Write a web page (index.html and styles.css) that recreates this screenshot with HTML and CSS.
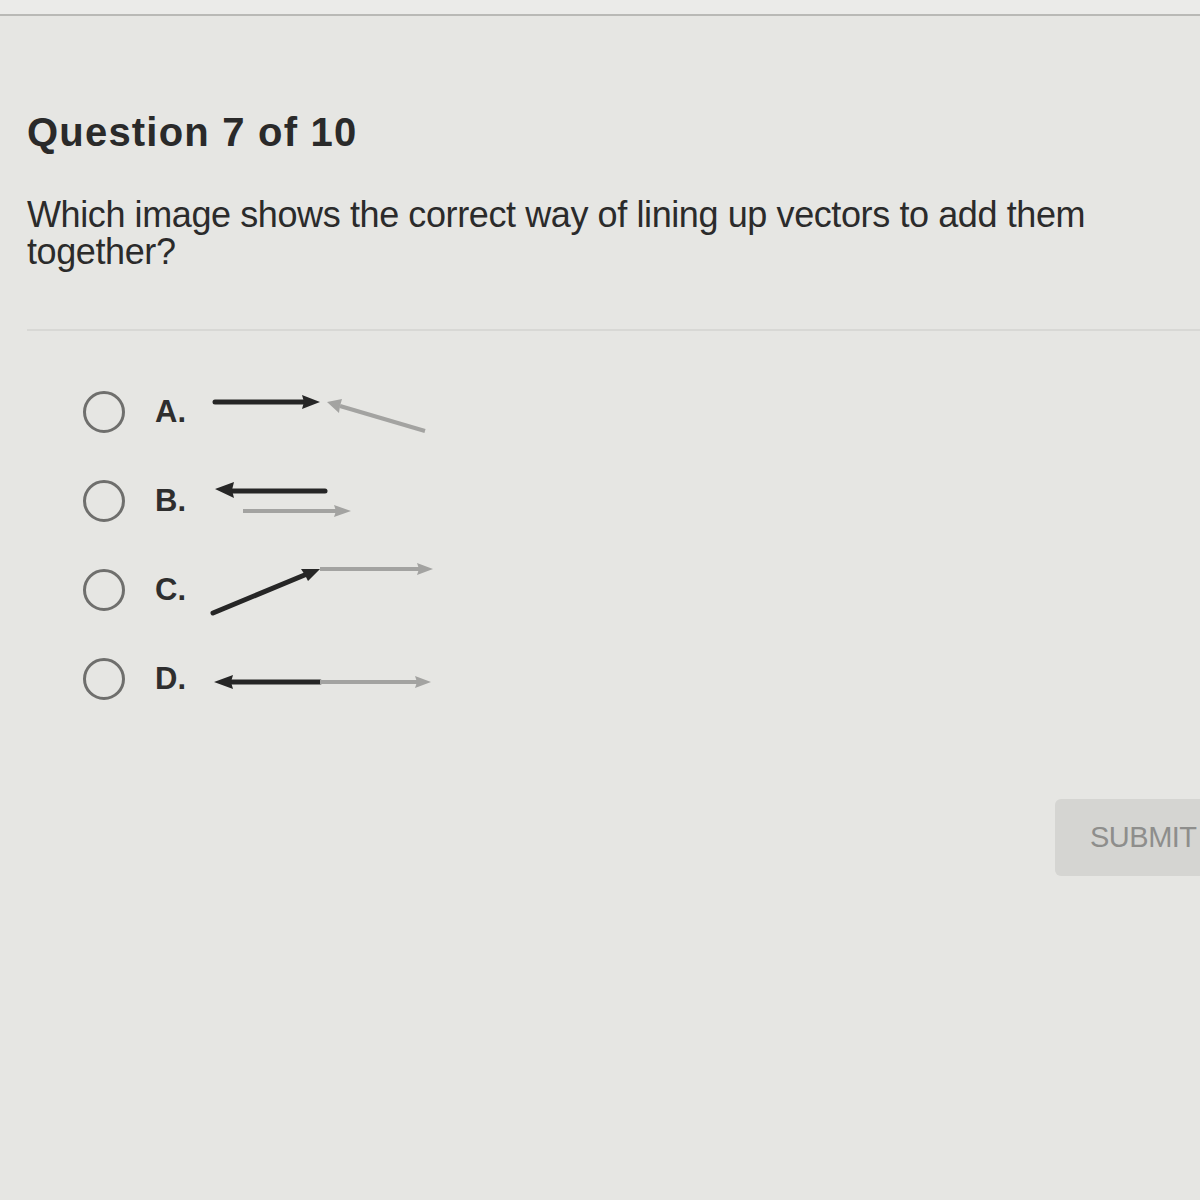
FILE: index.html
```html
<!DOCTYPE html>
<html>
<head>
<meta charset="utf-8">
<link rel="stylesheet" href="styles.css">
</head>
<body>
<div class="topbar"></div>
<main class="page">
  <h1 class="title">Question 7 of 10</h1>
  <p class="question">Which image shows the correct way of lining up vectors to add them together?</p>
  <hr class="sep">
  <div class="options">
    <div class="option">
      <span class="radio"></span>
      <span class="label">A.</span>
      <svg class="vec" width="240" height="60" viewBox="0 0 240 60">
        <line x1="10" y1="20" x2="100" y2="20" class="dark"/>
        <polygon points="115,20 97,13 99,20 97,27" class="darkfill"/>
        <line x1="220" y1="49" x2="135" y2="24" class="gray"/>
        <polygon points="122,20 137,17 135,24 134,31" class="grayfill"/>
      </svg>
    </div>
    <div class="option">
      <span class="radio"></span>
      <span class="label">B.</span>
      <svg class="vec" width="240" height="60" viewBox="0 0 240 60">
        <line x1="120" y1="20" x2="25" y2="20" class="dark"/>
        <polygon points="10,18 29,11 27,19 29,27" class="darkfill"/>
        <line x1="38" y1="40" x2="132" y2="40" class="gray"/>
        <polygon points="146,40 129,34 131,40 129,46" class="grayfill"/>
      </svg>
    </div>
    <div class="option">
      <span class="radio"></span>
      <span class="label">C.</span>
      <svg class="vec" width="240" height="60" viewBox="0 0 240 60">
        <line x1="8" y1="53" x2="102" y2="14" class="dark"/>
        <polygon points="115,9 96,9 100,15 103,21" class="darkfill"/>
        <line x1="115" y1="9" x2="215" y2="9" class="gray"/>
        <polygon points="228,9 212,3 214,9 212,15" class="grayfill"/>
      </svg>
    </div>
    <div class="option">
      <span class="radio"></span>
      <span class="label">D.</span>
      <svg class="vec" width="240" height="60" viewBox="0 0 240 60">
        <line x1="115" y1="33" x2="25" y2="33" class="dark"/>
        <polygon points="9,33 28,26 26,33 28,40" class="darkfill"/>
        <line x1="115" y1="33" x2="213" y2="33" class="gray"/>
        <polygon points="226,33 210,27 212,33 210,39" class="grayfill"/>
      </svg>
    </div>
  </div>
  <div class="actions">
    <button class="submit" type="button">SUBMIT</button>
  </div>
</main>
</body>
</html>
```

FILE: styles.css
```css
html, body {
  margin: 0;
  padding: 0;
}
body {
  background: #e6e6e3;
  font-family: "Liberation Sans", Arial, sans-serif;
  color: #262626;
  width: 1200px;
  height: 1200px;
  overflow: hidden;
}
.topbar {
  height: 14px;
  background: #ebebe9;
  border-bottom: 2px solid #b9b9b6;
}
.page {
  padding: 0 0 0 27px;
}
.title {
  margin: 94px 0 0 0;
  font-size: 40px;
  line-height: 44px;
  font-weight: bold;
  letter-spacing: 1.2px;
  color: #2a2a2a;
}
.question {
  margin: 42px 0 0 0;
  font-size: 36px;
  line-height: 37px;
  color: #2b2b2b;
  width: 1120px;
  letter-spacing: -0.4px;
}
.sep {
  margin: 59px 0 0 0;
  border: 0;
  border-top: 2px solid #d8d8d5;
  height: 0;
}
.options {
  margin-top: 51px;
  padding-left: 56px;
  display: flex;
  flex-direction: column;
  gap: 29px;
}
.option {
  display: flex;
  align-items: center;
  height: 60px;
}
.radio {
  width: 36px;
  height: 36px;
  border: 3px solid #6f6f6d;
  border-radius: 50%;
  flex: none;
}
.label {
  margin-left: 30px;
  width: 50px;
  font-size: 31px;
  font-weight: bold;
  color: #2e2e2e;
}
.vec {
  display: block;
  flex: none;
}
.dark {
  stroke: #262626;
  stroke-width: 5;
  stroke-linecap: round;
}
.darkfill {
  fill: #262626;
}
.gray {
  stroke: #a3a3a1;
  stroke-width: 4;
}
.grayfill {
  fill: #a3a3a1;
}
.actions {
  display: flex;
  justify-content: flex-end;
  margin-top: 90px;
  margin-right: -40px;
}
.submit {
  width: 185px;
  height: 77px;
  background: #d5d5d2;
  border: 0;
  border-radius: 6px;
  color: #8e8e8c;
  font-family: "Liberation Sans", Arial, sans-serif;
  font-size: 29px;
  text-align: left;
  padding-left: 35px;
  letter-spacing: -0.5px;
}
```
